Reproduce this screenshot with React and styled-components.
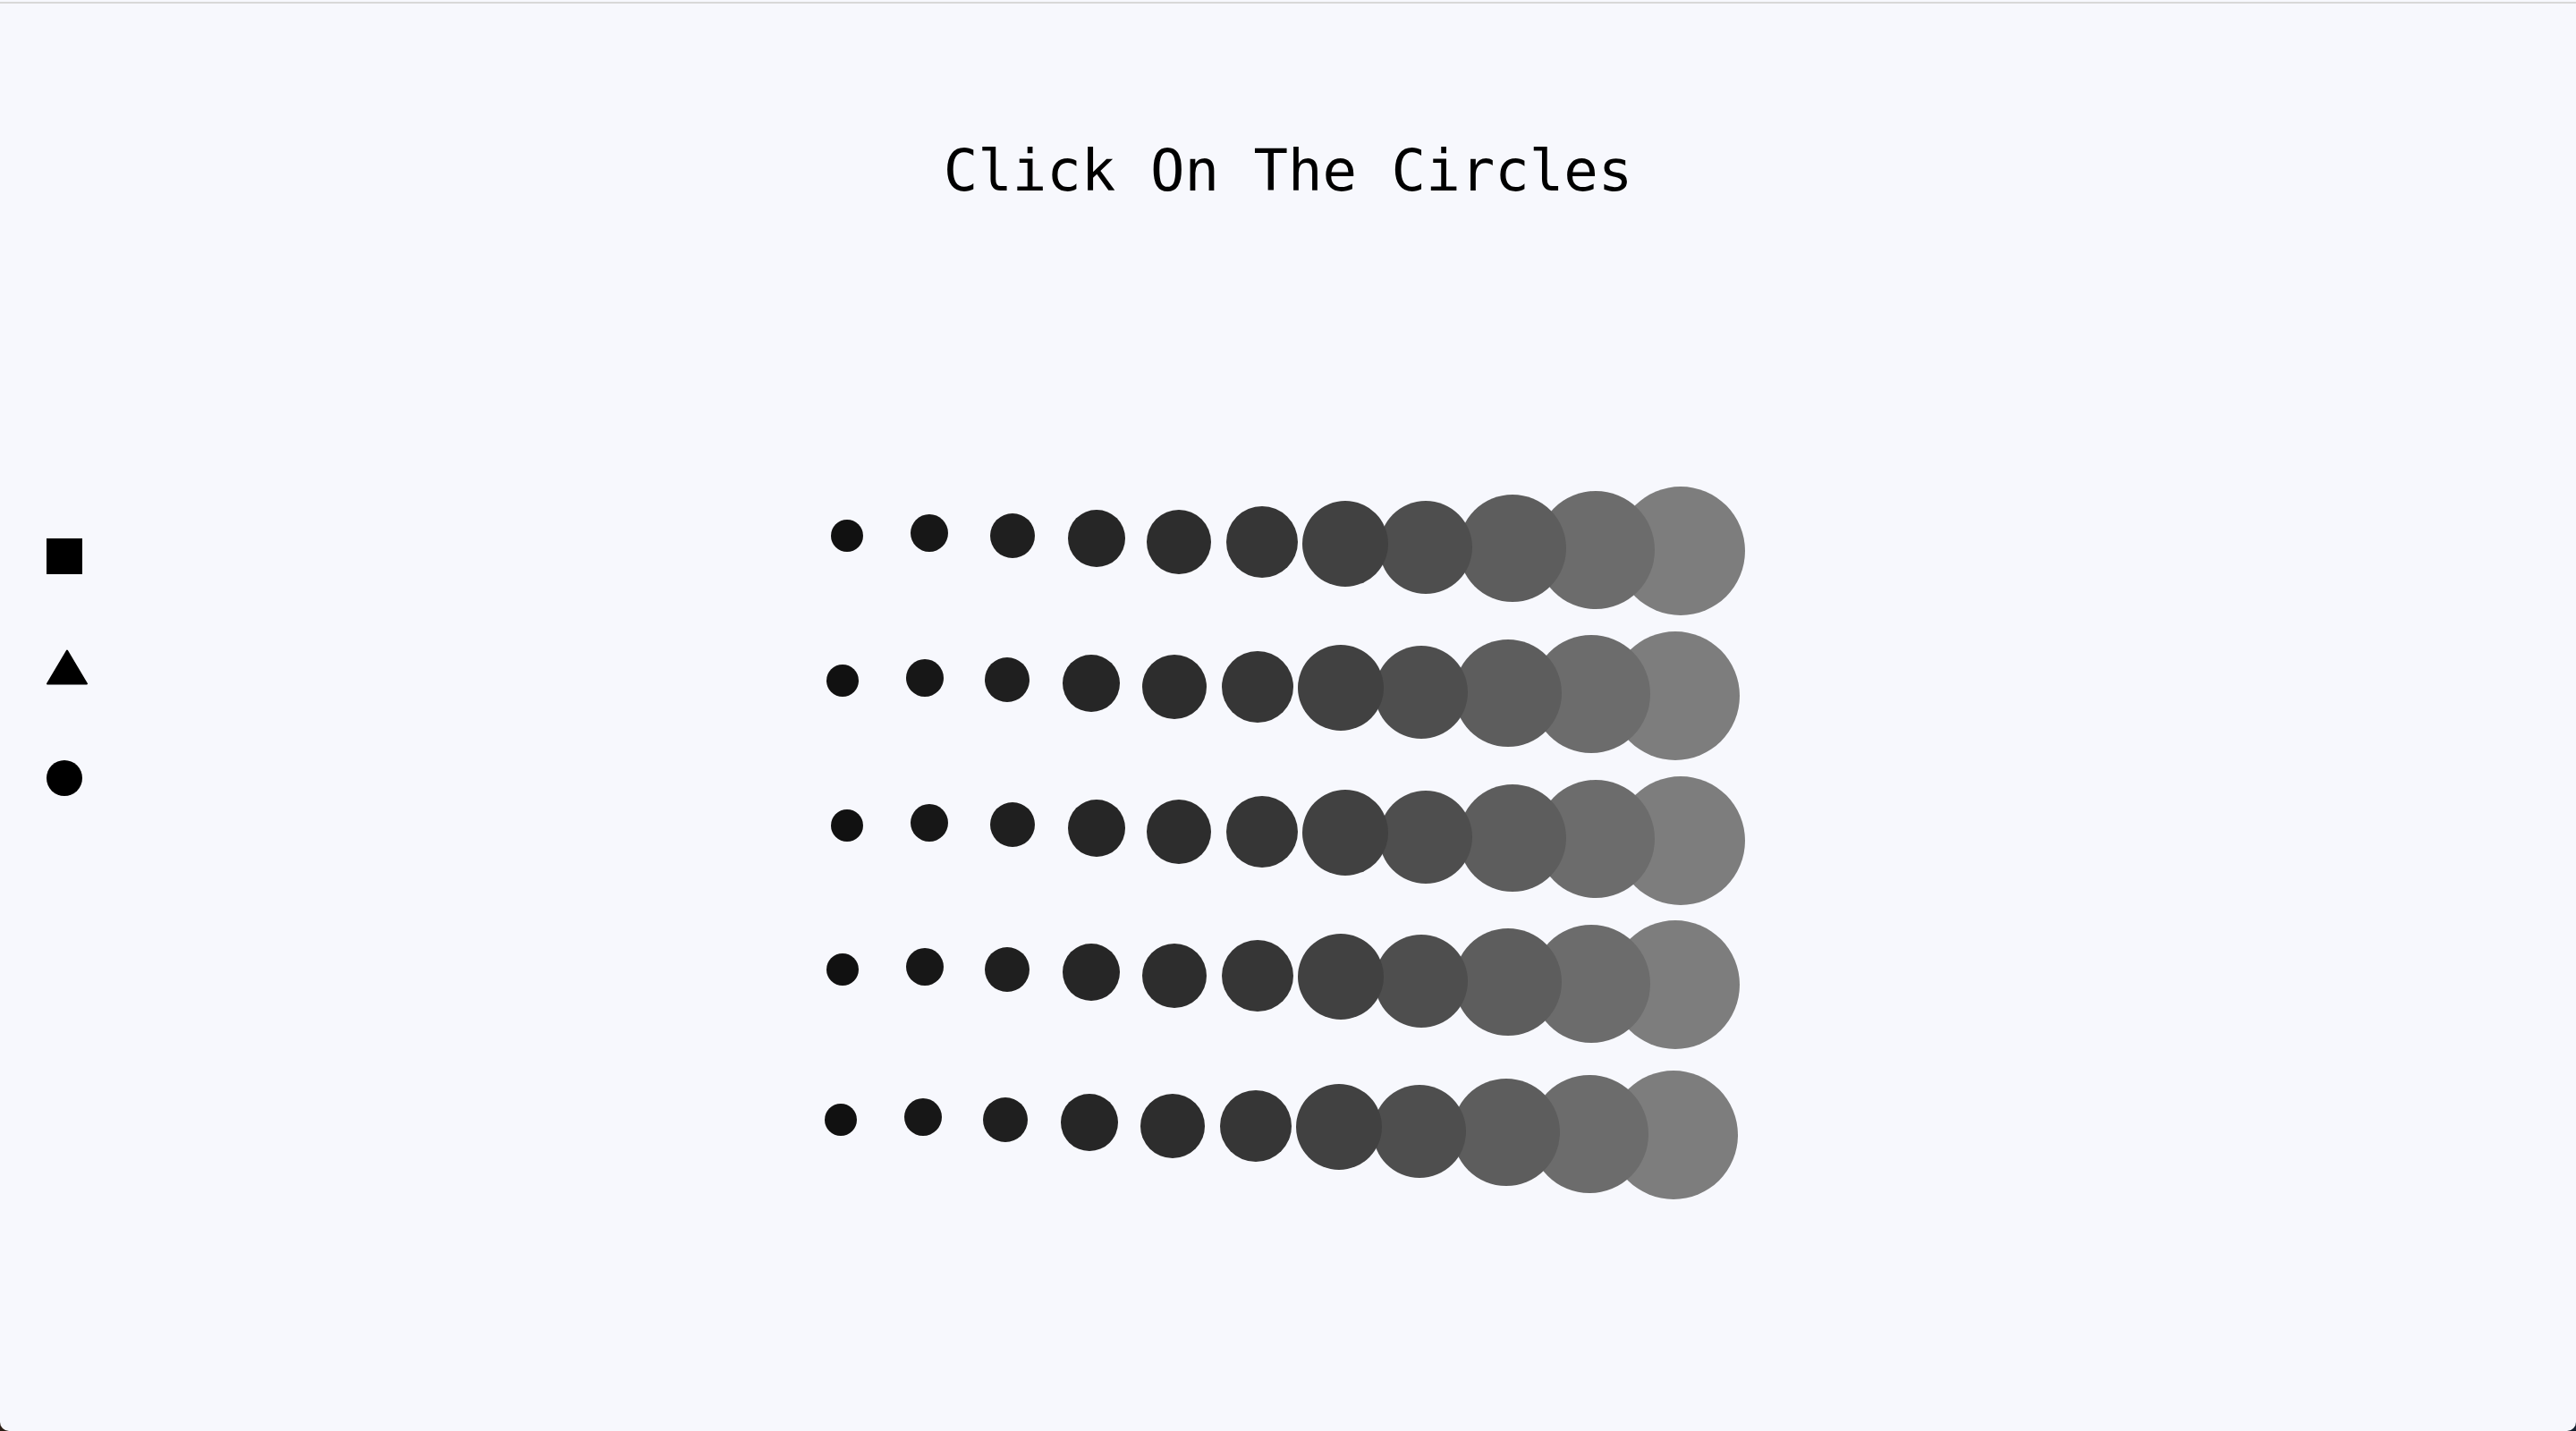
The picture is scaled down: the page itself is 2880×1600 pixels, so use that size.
import React from "react";
import styled, { createGlobalStyle } from "styled-components";

const GlobalStyle = createGlobalStyle`
  html, body {
    margin: 0;
    padding: 0;
  }
  body {
    background: linear-gradient(90deg, #2b1e15, #13202e);
    font-family: "DejaVu Sans", sans-serif;
  }
`;

const Page = styled.div`
  height: 100vh;
  box-sizing: border-box;
  padding-top: 2px;
  background: #f7f8fd;
  border-radius: 0 0 10px 10px;
  overflow: hidden;
  display: flex;
  flex-direction: column;
`;

const TopRule = styled.div`
  flex: 0 0 2px;
  background: #d8d8d8;
`;

const Title = styled.h1`
  margin: 155px 0 0;
  font-family: "DejaVu Sans Mono", "Liberation Mono", monospace;
  font-weight: 400;
  font-size: 64px;
  line-height: 64px;
  text-align: center;
  color: #000;
`;

const Main = styled.main`
  display: grid;
  grid-template-columns: 1fr auto 1fr;
  align-items: start;
`;

const Sidebar = styled.nav`
  justify-self: start;
  margin-top: 379px;
  padding-left: 52px;
  display: flex;
  flex-direction: column;
  align-items: flex-start;
  gap: 84px;
`;

const SquareShape = styled.div`
  width: 40px;
  height: 40px;
  background: #000;
`;

const CircleShape = styled.div`
  width: 40px;
  height: 40px;
  border-radius: 50%;
  background: #000;
`;

const TriangleSvg = styled.svg`
  display: block;
  width: 46px;
  height: 40px;
`;

const Board = styled.section`
  margin-top: 321px;
  display: flex;
  flex-direction: column;
  align-items: flex-start;
`;

const Row = styled.div`
  display: flex;
  align-items: flex-start;
  height: 144px;
  margin-top: ${(p) => p.$gap}px;
  margin-left: ${(p) => p.$shift}px;
`;

const Dot = styled.div`
  flex: 0 0 auto;
  width: ${(p) => p.$size}px;
  height: ${(p) => p.$size}px;
  border-radius: 50%;
  background: ${(p) => p.$color};
  margin-left: ${(p) => p.$ml}px;
  margin-top: ${(p) => p.$mt}px;
  z-index: ${(p) => p.$z};
  cursor: pointer;
`;

const SIZES = [36, 42, 50, 64, 72, 80, 96, 104, 120, 132, 144];
const CX = [947, 1039, 1131.5, 1225.7, 1318, 1411, 1504, 1594, 1691, 1784, 1878.4];
const CY = [599, 596, 598.7, 602, 606, 606.3, 607.5, 612, 613, 614.7, 616];
const COLORS = [
  "#111111",
  "#171717",
  "#1f1f1f",
  "#262626",
  "#2d2d2d",
  "#363636",
  "#414141",
  "#4e4e4e",
  "#5d5d5d",
  "#6c6c6c",
  "#7d7d7d",
];

const ROW_TOP = 544;

const DOTS = SIZES.map((size, i) => ({
  size,
  color: COLORS[i],
  ml: i === 0 ? 0 : CX[i] - CX[i - 1] - SIZES[i - 1] / 2 - size / 2,
  mt: CY[i] - size / 2 - ROW_TOP,
  z: SIZES.length - i,
}));

const ROWS = [
  { shift: 0, gap: 0 },
  { shift: -5.7, gap: 17.8 },
  { shift: 0, gap: 17.8 },
  { shift: -5.6, gap: 17.4 },
  { shift: -7.7, gap: 24 },
];

export default function App() {
  return (
    <>
      <GlobalStyle />
      <Page>
        <TopRule />
        <Title>Click On The Circles</Title>
        <Main>
          <Sidebar>
            <SquareShape />
            <TriangleSvg viewBox="0 0 46 40">
              <polygon
                points="23,1.5 45,38.5 1,38.5"
                fill="#000"
                stroke="#000"
                strokeWidth="2"
                strokeLinejoin="round"
              />
            </TriangleSvg>
            <CircleShape />
          </Sidebar>
          <Board>
            {ROWS.map((row, r) => (
              <Row key={r} $shift={row.shift} $gap={row.gap}>
                {DOTS.map((d, i) => (
                  <Dot
                    key={i}
                    $size={d.size}
                    $color={d.color}
                    $ml={d.ml}
                    $mt={d.mt}
                    $z={d.z}
                  />
                ))}
              </Row>
            ))}
          </Board>
          <div />
        </Main>
      </Page>
    </>
  );
}
